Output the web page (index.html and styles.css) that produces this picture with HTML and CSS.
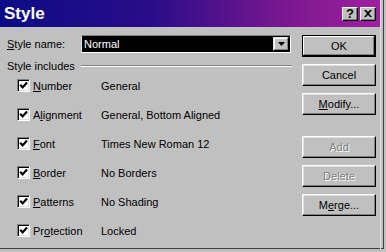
FILE: index.html
```html
<!DOCTYPE html>
<html lang="en">
<head>
    <meta charset="UTF-8">
    <title>Style</title>
    <link rel="stylesheet" href="styles.css">
</head>
<body>
    <div class="window">
        <div class="titlebar">
            <span class="title">Style</span>
            <div class="title-buttons">
                <span class="tbtn help">?</span>
                <span class="tbtn close">
                    <svg width="8" height="7" viewBox="0 0 8 7"><path d="M0 0h2l2 2 2-2h2L5 3.5 8 7H6L4 5 2 7H0l3-3.5z" fill="#000"/></svg>
                </span>
            </div>
        </div>

        <div class="content">
            <div class="main">
                <div class="name-row">
                    <label class="name-label"><u>S</u>tyle name:</label>
                    <div class="combo">
                        <span class="combo-text">Normal</span>
                        <span class="combo-btn">
                            <svg width="7" height="4" viewBox="0 0 7 4"><path d="M0 0h7L3.5 4z" fill="#000"/></svg>
                        </span>
                    </div>
                </div>

                <div class="group-head">
                    <span>Style includes</span>
                    <span class="etch"></span>
                </div>

                <div class="rows">
                    <div class="row"><span class="check"></span><span class="lbl"><u>N</u>umber</span><span class="val">General</span></div>
                    <div class="row"><span class="check"></span><span class="lbl">A<u>l</u>ignment</span><span class="val">General, Bottom Aligned</span></div>
                    <div class="row"><span class="check"></span><span class="lbl"><u>F</u>ont</span><span class="val">Times New Roman 12</span></div>
                    <div class="row"><span class="check"></span><span class="lbl"><u>B</u>order</span><span class="val">No Borders</span></div>
                    <div class="row"><span class="check"></span><span class="lbl"><u>P</u>atterns</span><span class="val">No Shading</span></div>
                    <div class="row"><span class="check"></span><span class="lbl">Pr<u>o</u>tection</span><span class="val">Locked</span></div>
                </div>
            </div>

            <div class="buttons">
                <button class="btn default">OK</button>
                <button class="btn">Cancel</button>
                <button class="btn"><u>M</u>odify...</button>
                <button class="btn disabled spaced">Add</button>
                <button class="btn disabled">Delete</button>
                <button class="btn">M<u>e</u>rge...</button>
            </div>
        </div>
    </div>
</body>
</html>
```

FILE: styles.css
```css
body {
    margin: 0;
    background: #c0c0c0;
    font-family: "Liberation Sans", Arial, sans-serif;
    font-size: 11px;
    color: #000;
}
.window {
    width: 386px;
    height: 252px;
    box-sizing: border-box;
    background: #c0c0c0;
    padding-right: 5px;
    padding-bottom: 4px;
    position: relative;
}
.window::after {
    content: "";
    position: absolute;
    right: 2px;
    bottom: 3px;
    width: 4px;
    height: 100%;
    border-right: 1px solid #404040;
    border-left: 1px solid #dfdfdf;
    box-sizing: border-box;
    pointer-events: none;
}
.window::before {
    content: "";
    position: absolute;
    left: 0;
    right: 3px;
    bottom: 3px;
    border-bottom: 1px solid #404040;
}
.titlebar {
    height: 27px;
    background: linear-gradient(to right, #0c0c84, #2a0c88 40%, #7a1890 75%, #a020a0);
    display: flex;
    align-items: center;
    justify-content: space-between;
    padding: 0 5px 0 4px;
}
.title {
    color: #fff;
    font-weight: bold;
    font-size: 17px;
}
.title-buttons {
    display: flex;
    gap: 2px;
}
.tbtn {
    width: 16px;
    height: 14px;
    box-sizing: border-box;
    background: #c0c0c0;
    border-top: 1px solid #fff;
    border-left: 1px solid #fff;
    border-right: 1px solid #000;
    border-bottom: 1px solid #000;
    box-shadow: inset -1px -1px #808080;
    display: flex;
    align-items: center;
    justify-content: center;
}
.help {
    font-weight: bold;
    font-size: 13px;
    line-height: 1;
}
.content {
    display: flex;
    padding: 8px 0 0 7px;
}
.main {
    width: 285px;
}
.name-row {
    display: flex;
    align-items: center;
    height: 18px;
}
.name-label {
    width: 74px;
}
.combo {
    width: 210px;
    height: 18px;
    box-sizing: border-box;
    background: #000;
    border: 1px solid #fff;
    border-top-color: #808080;
    border-left-color: #dfdfdf;
    display: flex;
    align-items: center;
    justify-content: space-between;
    padding: 1px;
}
.combo-text {
    color: #fff;
    padding-left: 1px;
}
.combo-btn {
    width: 16px;
    height: 14px;
    box-sizing: border-box;
    background: #c0c0c0;
    border-top: 1px solid #dfdfdf;
    border-left: 1px solid #dfdfdf;
    border-right: 1px solid #000;
    border-bottom: 1px solid #000;
    box-shadow: inset -1px -1px #808080, inset 1px 1px #fff;
    display: flex;
    align-items: center;
    justify-content: center;
}
.group-head {
    display: flex;
    align-items: center;
    margin-top: 7px;
    height: 12px;
}
.etch {
    flex: 1;
    margin-left: 6px;
    border-top: 1px solid #808080;
    border-bottom: 1px solid #fff;
}
.rows {
    display: flex;
    flex-direction: column;
    gap: 16px;
    margin-top: 7px;
    padding-left: 10px;
}
.row {
    display: flex;
    align-items: center;
    height: 13px;
}
.check {
    width: 13px;
    height: 13px;
    box-sizing: border-box;
    background: #fff url("data:image/svg+xml,%3Csvg xmlns='http://www.w3.org/2000/svg' width='9' height='9'%3E%3Cpath d='M1.2 3.8l2.4 2.6L8 1.4' stroke='%23000' stroke-width='2.2' fill='none'/%3E%3C/svg%3E") no-repeat 1px 1px;
    border-top: 1px solid #808080;
    border-left: 1px solid #808080;
    border-right: 1px solid #fff;
    border-bottom: 1px solid #fff;
    box-shadow: inset 1px 1px #000, inset -1px -1px #dfdfdf;
    margin-right: 3px;
}
.lbl {
    width: 68px;
}
.buttons {
    display: flex;
    flex-direction: column;
    gap: 7px;
    margin-left: 10px;
}
.btn {
    width: 74px;
    height: 22px;
    box-sizing: border-box;
    background: #c0c0c0;
    font-family: "Liberation Sans", Arial, sans-serif;
    font-size: 11px;
    color: #000;
    padding: 0;
    border-top: 1px solid #fff;
    border-left: 1px solid #fff;
    border-right: 1px solid #000;
    border-bottom: 1px solid #000;
    box-shadow: inset -1px -1px #808080, inset 1px 1px #dfdfdf;
}
.btn.default {
    border: 1px solid #000;
    box-shadow: inset -1px -1px #000, inset 1px 1px #fff, inset -2px -2px #808080;
}
.btn.spaced {
    margin-top: 14px;
}
.btn.disabled {
    color: #808080;
    text-shadow: 1px 1px #fff;
}
```
